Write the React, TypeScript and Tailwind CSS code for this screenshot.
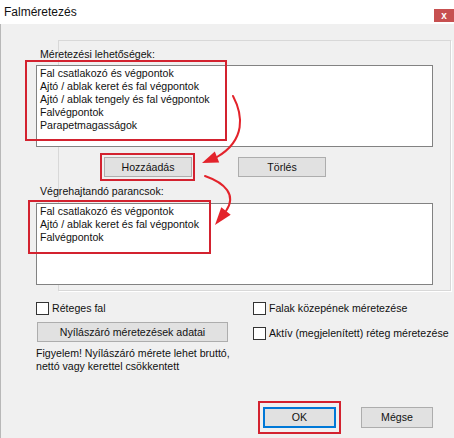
import React from "react";

function Checkbox({ label }: { label: string }) {
  return (
    <div className="flex items-center h-[13px]">
      <div className="w-[13px] h-[13px] border border-[#333333] bg-white shrink-0" />
      <span className="ml-[3px] leading-[13px] whitespace-nowrap">{label}</span>
    </div>
  );
}

function Btn({ label, w, extra = "" }: { label: string; w: string; extra?: string }) {
  return (
    <div
      className={`${w} h-[20px] bg-[#e1e1e1] border border-[#adadad] flex items-center justify-center leading-[13px] whitespace-nowrap ${extra}`}
    >
      {label}
    </div>
  );
}

export default function App() {
  const list1 = [
    "Fal csatlakozó és végpontok",
    "Ajtó / ablak keret és fal végpontok",
    "Ajtó / ablak tengely és fal végpontok",
    "Falvégpontok",
    "Parapetmagasságok",
  ];
  const list2 = [
    "Fal csatlakozó és végpontok",
    "Ajtó / ablak keret és fal végpontok",
    "Falvégpontok",
  ];
  return (
    <div
      className="relative w-[454px] h-[438px] bg-[#f0f0f0] overflow-hidden text-[#111111] text-[10.6px]"
      style={{ fontFamily: '"Liberation Sans", Arial, sans-serif' }}
    >
      {/* Title bar */}
      <div className="h-[24px] bg-white flex items-start justify-between">
        <div className="pl-[4px] pt-[5px] text-[12px] leading-[14px]">Falméretezés</div>
        <div className="mt-[9px] w-[20px] h-[13px] bg-[#c75050] flex items-center justify-center text-white text-[10px] leading-[10px] font-bold">
          x
        </div>
      </div>

      {/* Body */}
      <div className="relative h-[414px] border-l border-[#b8b8b8]">
        {/* group frame */}
        <div className="absolute left-[57px] top-[16px] w-[393px] h-[251px] border border-[#d8d8d8] shadow-[1px_1px_0_#ffffff]" />

        <div className="relative pl-[35px] flex flex-col">
          <div className="mt-[24px] ml-[4px] leading-[13px]">Méretezési lehetőségek:</div>
          <div className="mt-[4px] w-[397px] h-[82px] bg-white border border-[#828282] pl-[3px] pt-[1px]">
            {list1.map((t) => (
              <div key={t} className="leading-[13px] whitespace-nowrap">
                {t}
              </div>
            ))}
          </div>

          <div className="mt-[10px] ml-[68px] flex gap-[46px]">
            <Btn label="Hozzáadás" w="w-[88px]" />
            <Btn label="Törlés" w="w-[88px]" />
          </div>

          <div className="mt-[8px] ml-[4px] leading-[13px]">Végrehajtandó parancsok:</div>
          <div className="mt-[5px] w-[397px] h-[82px] bg-white border border-[#828282] pl-[3px] pt-[1px]">
            {list2.map((t) => (
              <div key={t} className="leading-[13px] whitespace-nowrap">
                {t}
              </div>
            ))}
          </div>

          <div className="mt-[17px] flex">
            <div className="w-[217px] flex flex-col">
              <Checkbox label="Réteges fal" />
              <Btn label="Nyílászáró méretezések adatai" w="w-[191px]" extra="mt-[7px] ml-[1px]" />
              <div className="mt-[5px] leading-[13px]">
                Figyelem! Nyílászáró mérete lehet bruttó,
                <br />
                nettó vagy kerettel csökkentett
              </div>
            </div>
            <div className="flex flex-col">
              <Checkbox label="Falak közepének méretezése" />
              <div className="mt-[12px]">
                <Checkbox label="Aktív (megjelenített) réteg méretezése" />
              </div>
            </div>
          </div>

          <div className="mt-[34px] ml-[227px] flex gap-[25px]">
            <div className="w-[73px] h-[21px] bg-[#e1e1e1] border-2 border-[#0078d7] flex items-center justify-center leading-[13px]">
              OK
            </div>
            <div className="w-[72px] h-[21px] bg-[#e1e1e1] border border-[#adadad] flex items-center justify-center leading-[13px]">
              Mégse
            </div>
          </div>
        </div>
      </div>

      {/* Annotations */}
      <div className="absolute left-[25px] top-[60px] w-[202px] h-[81px] border-2 border-[#d3222f] pointer-events-none" />
      <div className="absolute left-[100px] top-[153px] w-[95px] h-[28px] border-2 border-[#d3222f] pointer-events-none" />
      <div className="absolute left-[28px] top-[200px] w-[183px] h-[54px] border-2 border-[#d3222f] pointer-events-none" />
      <div className="absolute left-[258px] top-[401px] w-[83px] h-[33px] border-2 border-[#d3222f] pointer-events-none" />

      <svg className="absolute left-0 top-0 pointer-events-none" width="454" height="438" viewBox="0 0 454 438">
        <path d="M233 96 C 243 115, 246 140, 217 157" fill="none" stroke="#e3232b" strokeWidth="2" strokeLinecap="round" />
        <polygon points="202,163 214.8,151.4 219.2,162.6" fill="#e3232b" />
        <path d="M205 176 C 225 183, 237 195, 226 211" fill="none" stroke="#e3232b" strokeWidth="2" strokeLinecap="round" />
        <polygon points="215,225 221.3,207.3 230.7,214.7" fill="#e3232b" />
      </svg>
    </div>
  );
}
